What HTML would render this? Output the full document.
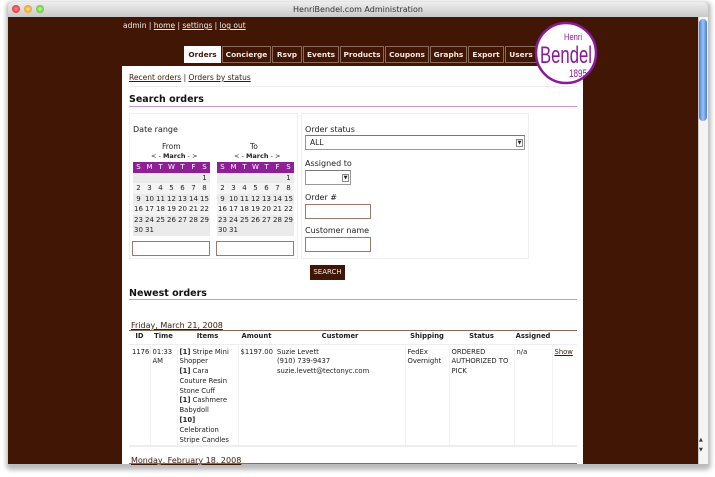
<!DOCTYPE html>
<html><head><meta charset="utf-8"><style>
*{margin:0;padding:0;box-sizing:border-box}
body{width:715px;height:477px;background:#fff;position:relative;overflow:hidden;font-family:"DejaVu Sans","Liberation Sans",sans-serif;font-size:7.5px;color:#222}
.a{position:absolute;white-space:nowrap}
#shadow{position:absolute;left:6px;top:2px;width:705px;height:468px;background:#bbb;border-radius:5px;filter:blur(2px)}
#title{position:absolute;left:8px;top:2px;width:700px;height:15px;background:linear-gradient(#eee,#c8c8c8);border-radius:5px 5px 0 0;text-align:center;font-size:8px;line-height:15px;color:#333}
.dot{position:absolute;top:5px;width:8px;height:8px;border-radius:50%}
#brown{position:absolute;left:8px;top:17px;width:690px;height:447px;background:#421604}
#sb{position:absolute;left:698px;top:17px;width:10px;height:447px;background:#f4f4f4;border-left:1px solid #ccc}
#thumb{position:absolute;left:699px;top:19px;width:8px;height:102px;border-radius:4px;background:linear-gradient(90deg,#4a7fd6,#9cc3f5,#4a7fd6)}
.tl{color:#eee;font-size:7.5px}
.tl u{color:#eee}
.tab{position:absolute;top:46px;height:17px;border:1px solid #8a6a5a;color:#f2e8e2;font-size:7.4px;font-weight:bold;line-height:15px;text-align:center}
#panel{position:absolute;left:122px;top:66px;width:461px;height:398px;background:#fff}
u{color:#3c1a08}
.h{font-size:9.5px;font-weight:bold;color:#111}
.box{position:absolute;border:1px solid #eee;background:#fff}
.cal{position:absolute;width:77px;font-size:7px}
.cal div{height:10.5px;line-height:10.5px;display:flex}
.cal span{flex:1;text-align:center}
.inp{position:absolute;border:1px solid #9a7a6a;background:#fff}
.sel{position:absolute;border:1px solid #999;border-top-color:#777;background:#fff;font-size:7.5px;line-height:13px;padding-left:4px}
.sel i{position:absolute;right:1px;top:3px;width:7px;height:8px;border:1px solid #888;font-size:5px;line-height:6px;text-align:center;font-style:normal}
table{table-layout:fixed}
td,th{font-size:6.8px;vertical-align:top;line-height:9.8px;overflow:hidden;white-space:normal}
td{padding:3px 1px 0 2px;border-left:1px solid #f2f2f2}
</style></head><body>
<div id="shadow"></div>
<div id="title">HenriBendel.com Administration</div>
<div class="dot" style="left:12px;background:radial-gradient(#f88,#c22)"></div>
<div class="dot" style="left:24px;background:radial-gradient(#fd8,#d80)"></div>
<div class="dot" style="left:36px;background:radial-gradient(#bf8,#4a2)"></div>
<div id="brown"></div>
<div id="sb"></div><div id="thumb"></div>
<div class="a" style="left:699px;top:437px;font-size:5px;color:#333">▲</div>
<div class="a" style="left:699px;top:447px;font-size:5px;color:#333">▼</div>
<div class="a tl" style="left:123px;top:21px">admin | <u>home</u> | <u>settings</u> | <u>log out</u></div>
<div class="tab" style="left:184px;width:37px;background:#fff;color:#3c1a08;border-color:#fff">Orders</div>
<div class="tab" style="left:222px;width:49px">Concierge</div>
<div class="tab" style="left:272px;width:30px">Rsvp</div>
<div class="tab" style="left:303px;width:36px">Events</div>
<div class="tab" style="left:340px;width:44px">Products</div>
<div class="tab" style="left:385px;width:44px">Coupons</div>
<div class="tab" style="left:430px;width:37px">Graphs</div>
<div class="tab" style="left:468px;width:36px">Export</div>
<div class="tab" style="left:505px;width:32px">Users</div>
<div id="panel"></div>
<svg class="a" style="left:534px;top:21px" width="64" height="64"><circle cx="32" cy="32" r="30" fill="#fff" stroke="#8a1a9a" stroke-width="2.5"/>
<text x="39" y="19" font-size="9" fill="#8a1a9a" font-family="Liberation Sans" text-anchor="middle" textLength="18" lengthAdjust="spacingAndGlyphs">Henri</text>
<text x="32" y="42" font-size="24" fill="#8a1a9a" font-family="Liberation Sans" text-anchor="middle" textLength="52" lengthAdjust="spacingAndGlyphs">Bendel</text>
<text x="44" y="56" font-size="11" fill="#8a1a9a" font-family="Liberation Sans" text-anchor="middle" textLength="18" lengthAdjust="spacingAndGlyphs">1895</text></svg>
<div class="a" style="left:129px;top:73px"><u>Recent orders</u> | <u>Orders by status</u></div>
<div class="a" style="left:129px;top:86px;width:448px;border-top:1px solid #eee"></div>
<div class="a h" style="left:129px;top:94px">Search orders</div>
<div class="a" style="left:129px;top:106px;width:448px;border-top:1px solid #c79ad0"></div>
<div class="box" style="left:129px;top:113px;width:169px;height:146px"></div>
<div class="box" style="left:301px;top:113px;width:228px;height:146px"></div>
<div class="a" style="left:133px;top:125px;font-size:8px">Date range</div>
<div class="a" style="left:162px;top:142px">From</div>
<div class="a" style="left:151px;top:152px;font-size:6.5px">&lt; - <b>March</b> - &gt;</div>
<div class="a" style="left:250px;top:142px">To</div>
<div class="a" style="left:234px;top:152px;font-size:6.5px">&lt; - <b>March</b> - &gt;</div>
<div class="cal" style="left:133px;top:162px">
<div style="background:#8e1f94;color:#fff"><span>S</span><span>M</span><span>T</span><span>W</span><span>T</span><span>F</span><span>S</span></div>
<div style="background:#ebebeb"><span></span><span></span><span></span><span></span><span></span><span></span><span>1</span></div>
<div style="background:#f4f4f4"><span>2</span><span>3</span><span>4</span><span>5</span><span>6</span><span>7</span><span>8</span></div>
<div style="background:#ebebeb"><span>9</span><span>10</span><span>11</span><span>12</span><span>13</span><span>14</span><span>15</span></div>
<div style="background:#f4f4f4"><span>16</span><span>17</span><span>18</span><span>19</span><span>20</span><span>21</span><span>22</span></div>
<div style="background:#ebebeb"><span>23</span><span>24</span><span>25</span><span>26</span><span>27</span><span>28</span><span>29</span></div>
<div style="background:#ebebeb"><span>30</span><span>31</span><span></span><span></span><span></span><span></span><span></span></div>
</div>
<div class="cal" style="left:217px;top:162px">
<div style="background:#8e1f94;color:#fff"><span>S</span><span>M</span><span>T</span><span>W</span><span>T</span><span>F</span><span>S</span></div>
<div style="background:#ebebeb"><span></span><span></span><span></span><span></span><span></span><span></span><span>1</span></div>
<div style="background:#f4f4f4"><span>2</span><span>3</span><span>4</span><span>5</span><span>6</span><span>7</span><span>8</span></div>
<div style="background:#ebebeb"><span>9</span><span>10</span><span>11</span><span>12</span><span>13</span><span>14</span><span>15</span></div>
<div style="background:#f4f4f4"><span>16</span><span>17</span><span>18</span><span>19</span><span>20</span><span>21</span><span>22</span></div>
<div style="background:#ebebeb"><span>23</span><span>24</span><span>25</span><span>26</span><span>27</span><span>28</span><span>29</span></div>
<div style="background:#ebebeb"><span>30</span><span>31</span><span></span><span></span><span></span><span></span><span></span></div>
</div>
<div class="inp" style="left:132px;top:241px;width:78px;height:15px"></div>
<div class="inp" style="left:216px;top:241px;width:78px;height:15px"></div>
<div class="a" style="left:305px;top:125px;font-size:8px">Order status</div>
<div class="sel" style="left:305px;top:135px;width:220px;height:15px">ALL<i>▼</i></div>
<div class="a" style="left:305px;top:159px;font-size:8px">Assigned to</div>
<div class="sel" style="left:305px;top:170px;width:46px;height:15px"><i>▼</i></div>
<div class="a" style="left:305px;top:193px;font-size:8px">Order #</div>
<div class="inp" style="left:305px;top:204px;width:66px;height:15px"></div>
<div class="a" style="left:305px;top:226px;font-size:8px">Customer name</div>
<div class="inp" style="left:305px;top:237px;width:66px;height:15px"></div>
<div class="a" style="left:310px;top:265px;width:35px;height:15px;background:#421604;color:#eee;font-size:7px;line-height:15px;text-align:center">SEARCH</div>
<div class="a h" style="left:129px;top:288px">Newest orders</div>
<div class="a" style="left:129px;top:299px;width:448px;border-top:1px solid #c79ad0"></div>
<div class="a" style="left:131px;top:321px;font-size:8px;color:#5a2a0a"><u>Friday, March 21, 2008</u></div>
<div class="a" style="left:129px;top:330px;width:448px;border-top:1px solid #8a6a5a"></div>
<table class="a" style="left:129px;top:332px;width:448px;border-collapse:collapse">
<colgroup><col style="width:21px"><col style="width:27px"><col style="width:61px"><col style="width:37px"><col style="width:130px"><col style="width:44px"><col style="width:65px"><col style="width:38px"><col style="width:25px"></colgroup>
<tr style="border-bottom:1px solid #eee;height:12px"><th>ID</th><th>Time</th><th>Items</th><th>Amount</th><th>Customer</th><th>Shipping</th><th>Status</th><th>Assigned</th><th></th></tr>
<tr style="border-bottom:2px solid #eee;height:95px"><td style="padding-left:3px;border-left:0">1176</td><td>01:33<br>AM</td><td><b>[1]</b> Stripe Mini Shopper<br><b>[1]</b> Cara Couture Resin Stone Cuff<br><b>[1]</b> Cashmere Babydoll<br><b>[10]</b><br>Celebration Stripe Candles</td><td>$1197.00</td><td style="border-left:0">Suzie Levett<br>(910) 739-9437<br>suzie.levett@tectonyc.com</td><td>FedEx<br>Overnight</td><td>ORDERED<br>AUTHORIZED&nbsp;TO<br>PICK</td><td>n/a</td><td><u>Show</u></td></tr>
</table>
<div class="a" style="left:131px;top:456px;font-size:8px;color:#5a2a0a"><u>Monday, February 18, 2008</u></div>
<div class="a" style="left:129px;top:463px;width:448px;border-top:1px solid #8a6a5a"></div>
</body></html>
